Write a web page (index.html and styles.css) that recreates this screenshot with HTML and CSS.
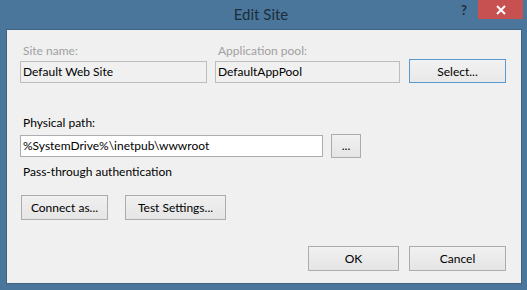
FILE: index.html
```html
<!DOCTYPE html>
<html lang="en">
<head>
  <meta charset="UTF-8">
  <title>Edit Site</title>
  <link rel="stylesheet" href="styles.css">
</head>
<body>
  <div class="window">
    <!-- Title bar -->
    <div class="titlebar">
      <span class="title">Edit Site</span>
      <span class="help">?</span>
      <span class="close">
        <svg width="10" height="10" viewBox="0 0 10 10">
          <path d="M1 1 L9 9 M9 1 L1 9" stroke="#fff" stroke-width="2" fill="none"/>
        </svg>
      </span>
    </div>

    <!-- Dialog body -->
    <div class="client">
      <div class="top-row">
        <div class="field site">
          <label class="muted">Site name:</label>
          <div class="box disabled">Default Web Site</div>
        </div>
        <div class="field pool">
          <label class="muted">Application pool:</label>
          <div class="box disabled">DefaultAppPool</div>
        </div>
        <button class="btn select">Select...</button>
      </div>

      <label class="path-label">Physical path:</label>
      <div class="path-row">
        <div class="box path">%SystemDrive%\inetpub\wwwroot</div>
        <button class="btn browse">...</button>
      </div>
      <div class="auth">Pass-through authentication</div>

      <div class="conn-row">
        <button class="btn connect">Connect as...</button>
        <button class="btn test">Test Settings...</button>
      </div>

      <div class="footer">
        <button class="btn ok">OK</button>
        <button class="btn cancel">Cancel</button>
      </div>
    </div>
  </div>
</body>
</html>
```

FILE: styles.css
```css
body {
  margin: 0;
  width: 527px;
  height: 290px;
  overflow: hidden;
  font-family: Lato, "Noto Sans", sans-serif;
  font-size: 12px;
}

.window {
  width: 527px;
  height: 290px;
  background: #49769a;
  padding: 0 5px 6px 6px;
  box-sizing: border-box;
  display: flex;
  flex-direction: column;
}

.titlebar {
  position: relative;
  height: 29px;
  flex-shrink: 0;
}

.title {
  display: block;
  text-align: center;
  padding-top: 5px;
  margin-left: -6px;
  font-size: 15px;
  color: #1d2d3c;
}

.help {
  position: absolute;
  left: 455px;
  top: 2px;
  font-weight: bold;
  font-size: 13px;
  color: #1d2d3c;
}

.close {
  position: absolute;
  left: 472px;
  top: 0;
  width: 45px;
  height: 19px;
  background: #c75050;
  display: flex;
  align-items: center;
  justify-content: center;
}

.client {
  flex: 1;
  background: #f0f0f0;
  border: 1px solid #3d6583;
  padding: 13px 15px 0 13px;
  color: #000;
}

label {
  display: block;
  height: 16px;
  line-height: 16px;
  padding-left: 3px;
}

.muted {
  color: #a0a0a0;
}

.top-row {
  display: flex;
  align-items: flex-end;
}

.field label {
  margin-bottom: 2px;
}

.site {
  width: 187px;
  margin-right: 8px;
}

.pool {
  width: 185px;
  margin-right: 9px;
}

.box {
  height: 22px;
  line-height: 20px;
  border: 1px solid #abadb3;
  padding-left: 2px;
  box-sizing: border-box;
  white-space: nowrap;
  overflow: hidden;
}

.disabled {
  border-color: #bcbcbc;
  background: #f0f0f0;
  color: #000;
}

.btn {
  font-family: inherit;
  font-size: 12px;
  color: #000;
  height: 25px;
  padding: 0;
  border: 1px solid #acacac;
  background: linear-gradient(#f0f0f0, #e5e5e5);
  box-sizing: border-box;
}

.select {
  width: 97px;
  height: 24px;
  background: linear-gradient(#f2f2f2, #e8e8e8);
  border-color: #5a98d0;
}

.path-label {
  margin-top: 32px;
  margin-bottom: 3px;
}

.path-row {
  display: flex;
  align-items: center;
}

.path {
  width: 303px;
  background: #fff;
  margin-right: 8px;
}

.browse {
  width: 30px;
  height: 24px;
  line-height: 18px;
}

.auth {
  margin-top: 6px;
  padding-left: 3px;
  height: 16px;
  line-height: 16px;
}

.conn-row {
  display: flex;
  gap: 17px;
  margin-top: 15px;
  padding-left: 1px;
}

.connect {
  width: 87px;
}

.test {
  width: 101px;
}

.footer {
  display: flex;
  justify-content: flex-end;
  gap: 10px;
  margin-top: 26px;
}

.ok {
  width: 91px;
}

.cancel {
  width: 97px;
}
```
